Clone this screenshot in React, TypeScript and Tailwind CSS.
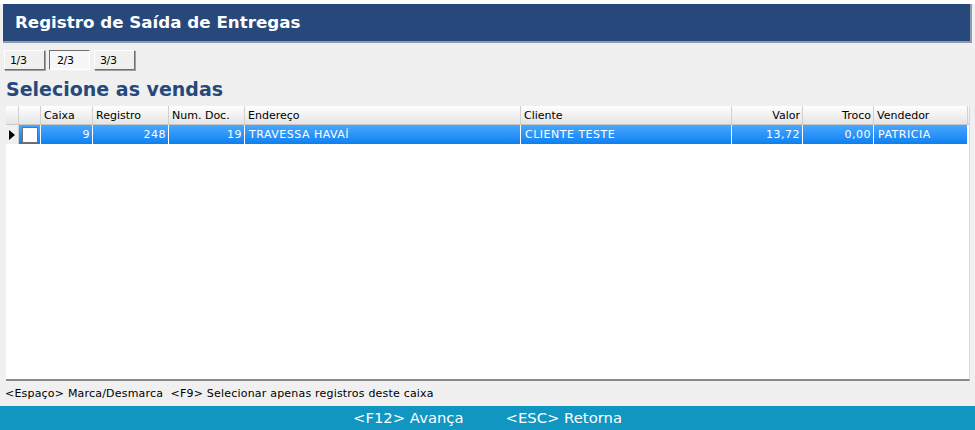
const cols = [
  { label: "Caixa", w: 52, value: "9", right: true, headRight: false },
  { label: "Registro", w: 76, value: "248", right: true, headRight: false },
  { label: "Num. Doc.", w: 76, value: "19", right: true, headRight: false },
  { label: "Endereço", w: 276, value: "TRAVESSA HAVAÍ", right: false, headRight: false },
  { label: "Cliente", w: 211, value: "CLIENTE TESTE", right: false, headRight: false },
  { label: "Valor", w: 71, value: "13,72", right: true, headRight: true },
  { label: "Troco", w: 71, value: "0,00", right: true, headRight: true },
  { label: "Vendedor", w: 94, value: "PATRICIA", right: false, headRight: false },
];

function Tab({ label, pressed }: { label: string; pressed?: boolean }) {
  return (
    <div
      className={
        pressed
          ? "w-[41px] h-[20px] border border-t-[#6e6e6e] border-l-[#6e6e6e] border-b-white border-r-white bg-[#f7f7f7] pl-[7px] pt-[2px] text-[11px]"
          : "w-[41px] h-[20px] border border-t-white border-l-white border-b-[#6e6e6e] border-r-[#6e6e6e] bg-[#f0f0f0] pl-[5px] pt-[2px] text-[11px] shadow-[1px_1px_0_#a0a0a0]"
      }
    >
      {label}
    </div>
  );
}

export default function App() {
  return (
    <div className="w-[975px] h-[430px] bg-[#f0f0f0] flex flex-col text-black font-['DejaVu_Sans',Verdana,sans-serif] overflow-hidden">
      <div className="h-[4px] bg-white" />
      <div className="mx-[3px] h-[39px] bg-[#27487a] border-r-2 border-b-2 border-[#8f9cb0] flex items-center pl-[12px]">
        <span className="text-white font-bold text-[16.7px]">Registro de Saída de Entregas</span>
      </div>
      <div className="flex gap-[4px] pl-[4px] mt-[7px] tracking-[-0.4px]">
        <Tab label="1/3" />
        <Tab label="2/3" pressed />
        <Tab label="3/3" />
      </div>
      <div className="pl-[6px] mt-[6px] h-[30px] text-[19px] font-bold text-[#27487a] leading-[26px]">Selecione as vendas</div>
      <div className="mx-[6px] mr-[5px] h-[275px] bg-white border-b-2 border-[#8a8a8a] border-r border-r-[#d8d8d8] flex flex-col text-[11px]">
        <div className="flex h-[19px] bg-gradient-to-b from-white to-[#e4e4e4] border-b border-[#c8c8c8]">
          <div className="w-[13px] border-r border-[#d0d0d0]" />
          <div className="w-[22px] border-r border-[#d0d0d0]" />
          {cols.map((c) => (
            <div
              key={c.label}
              style={{ width: c.w }}
              className={`shrink-0 border-r border-[#d0d0d0] pl-[3px] pr-[2px] leading-[19px] ${c.headRight ? "text-right" : ""}`}
            >
              {c.label}
            </div>
          ))}
        </div>
        <div className="flex h-[19px]">
          <div className="w-[13px] flex items-center bg-[#f0f0f0] border-r border-[#d0d0d0]">
            <svg width="6" height="10" viewBox="0 0 6 10" className="ml-[3px]">
              <path d="M0 0 L6 5 L0 10 Z" fill="#000" />
            </svg>
          </div>
          <div className="w-[22px] bg-gradient-to-b from-[#45a8ff] to-[#0a80f0] flex items-center pl-[3px] border-r border-white">
            <div className="w-[16px] h-[16px] bg-white border border-[#707070]" />
          </div>
          {cols.map((c) => (
            <div
              key={c.label}
              style={{ width: c.w }}
              className={`shrink-0 bg-gradient-to-b from-[#45a8ff] to-[#0a80f0] border-r border-white text-white pl-[4px] pr-[2px] leading-[19px] tracking-[0.5px] ${c.right ? "text-right" : ""}`}
            >
              {c.value}
            </div>
          ))}
        </div>
      </div>
      <div className="pl-[5px] h-[24px] flex items-center text-[11px] tracking-[0.2px] mt-[1px]">
        {"<Espaço> Marca/Desmarca  <F9> Selecionar apenas registros deste caixa".replace(/ /g, "\u00a0")}
      </div>
      <div className="flex-1 bg-[#1195c1] flex items-center justify-center gap-[42px] text-white text-[14.8px]">
        <span>&lt;F12&gt; Avança</span>
        <span>&lt;ESC&gt; Retorna</span>
      </div>
    </div>
  );
}
